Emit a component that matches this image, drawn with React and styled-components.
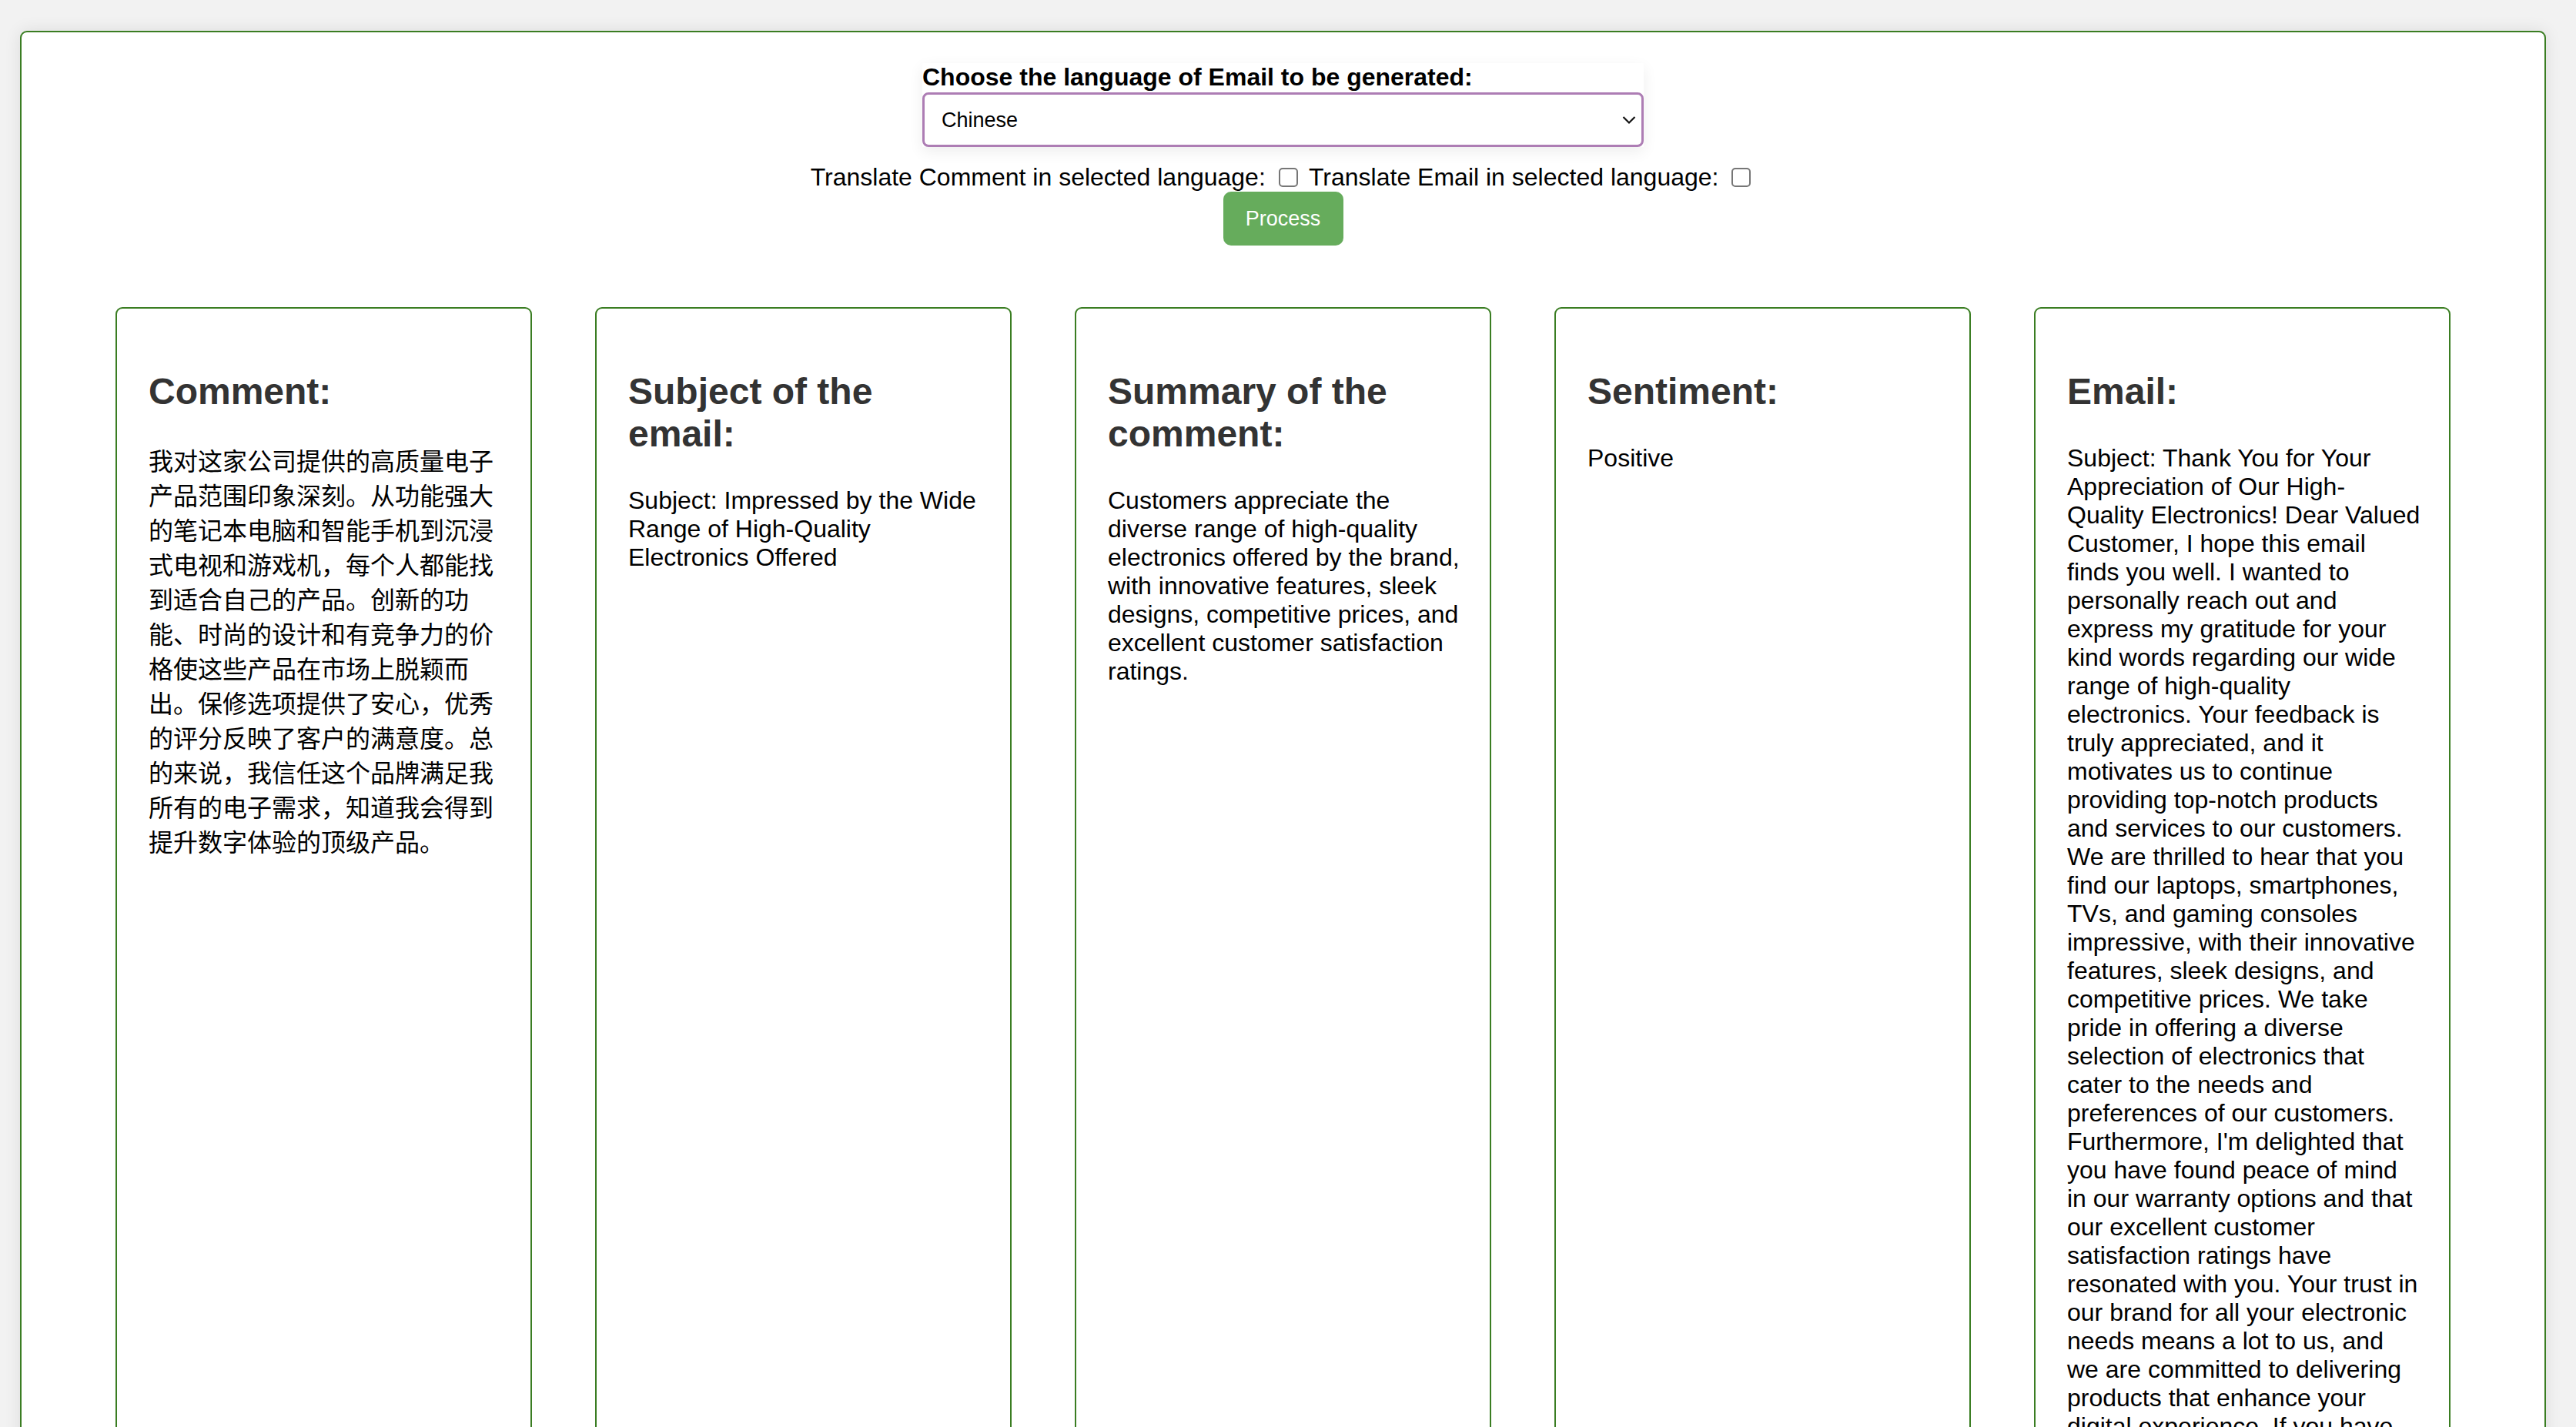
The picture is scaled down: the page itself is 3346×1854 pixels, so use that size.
import React, { useState } from 'react';
import styled, { createGlobalStyle, css } from 'styled-components';

const GlobalStyle = createGlobalStyle`
  body {
    margin: 0;
    background: #f2f2f2;
    font-family: "Liberation Sans", Arial, "Noto Sans CJK SC", sans-serif;
    color: #000;
  }
`;

const Container = styled.div`
  margin: 40px 39px 40px 26px;
  padding: 40px 0 80px;
  background: #fff;
  border: 2px solid #3a7d22;
  border-radius: 9px;
  box-shadow: 0 0 22px rgba(0, 0, 0, 0.09);
`;

const LangBox = styled.div`
  width: 937px;
  margin: 0 auto;
  background: #fff;
  box-shadow: 0 6px 18px rgba(0, 0, 0, 0.07);
`;

const Label = styled.label`
  display: block;
  font-size: 32px;
  line-height: 37px;
  font-weight: bold;
`;

const SelectWrap = styled.div`
  position: relative;
  margin-top: 1px;
`;

const Select = styled.select`
  display: block;
  width: 100%;
  height: 71px;
  box-sizing: border-box;
  padding: 0 60px 0 22px;
  border: 3.5px solid #ad7db4;
  border-radius: 8px;
  background: #fff;
  font-family: inherit;
  font-size: 27px;
  color: #000;
  appearance: none;
  outline: none;
`;

const Chevron = styled.svg`
  position: absolute;
  right: 10px;
  top: 50%;
  transform: translateY(-50%);
  pointer-events: none;
`;

const OptionsRow = styled.div`
  margin-top: 21px;
  text-align: center;
  font-size: 32px;
  line-height: 37px;
`;

const Check = styled.input`
  appearance: none;
  width: 25px;
  height: 25px;
  box-sizing: border-box;
  margin: 0 6px 0 8px;
  border: 2px solid #767676;
  border-radius: 5px;
  background: #fff;
  vertical-align: -2px;
  &:checked {
    background: #3b82f6;
    border-color: #3b82f6;
  }
`;

const ProcessButton = styled.button`
  display: block;
  margin: 0 auto;
  width: 156px;
  height: 70px;
  border: none;
  border-radius: 10px;
  background: #66ac5c;
  color: #fff;
  font-family: inherit;
  font-size: 27px;
  cursor: pointer;
`;

const CardRow = styled.div`
  display: flex;
  justify-content: center;
  align-items: stretch;
  gap: 82px;
  margin-top: 80px;
`;

const Card = styled.div`
  flex: 0 0 541px;
  box-sizing: border-box;
  padding: 38px 36.6px 60px 41px;
  border: 2px solid #3a7d22;
  border-radius: 9px;
`;

const CardTitle = styled.h2`
  margin: 42px 0 41px;
  font-size: 48px;
  font-weight: bold;
  color: #333;
`;

const CardText = styled.p`
  margin: 0;
  font-size: 32px;
  ${(p) =>
    p.$cjk &&
    css`
      font-family: "Noto Sans CJK SC", sans-serif;
      line-height: 45px;
      margin-top: -2px;
    `}
`;

const results = [
  {
    title: 'Comment:',
    cjk: true,
    text: '我对这家公司提供的高质量电子产品范围印象深刻。从功能强大的笔记本电脑和智能手机到沉浸式电视和游戏机，每个人都能找到适合自己的产品。创新的功能、时尚的设计和有竞争力的价格使这些产品在市场上脱颖而出。保修选项提供了安心，优秀的评分反映了客户的满意度。总的来说，我信任这个品牌满足我所有的电子需求，知道我会得到提升数字体验的顶级产品。',
  },
  {
    title: 'Subject of the email:',
    text: 'Subject: Impressed by the Wide Range of High-Quality Electronics Offered',
  },
  {
    title: 'Summary of the comment:',
    text: 'Customers appreciate the diverse range of high-quality electronics offered by the brand, with innovative features, sleek designs, competitive prices, and excellent customer satisfaction ratings.',
  },
  {
    title: 'Sentiment:',
    text: 'Positive',
  },
  {
    title: 'Email:',
    text: "Subject: Thank You for Your Appreciation of Our High-Quality Electronics! Dear Valued Customer, I hope this email finds you well. I wanted to personally reach out and express my gratitude for your kind words regarding our wide range of high-quality electronics. Your feedback is truly appreciated, and it motivates us to continue providing top-notch products and services to our customers. We are thrilled to hear that you find our laptops, smartphones, TVs, and gaming consoles impressive, with their innovative features, sleek designs, and competitive prices. We take pride in offering a diverse selection of electronics that cater to the needs and preferences of our customers. Furthermore, I'm delighted that you have found peace of mind in our warranty options and that our excellent customer satisfaction ratings have resonated with you. Your trust in our brand for all your electronic needs means a lot to us, and we are committed to delivering products that enhance your digital experience. If you have any further questions or need assistance, please do not hesitate to reach out to our customer support team. Once again, thank you for choosing our brand. Best regards, Customer Service Team",
  },
];

const App = () => {
  const [language, setLanguage] = useState('Chinese');
  const [translateComment, setTranslateComment] = useState(false);
  const [translateEmail, setTranslateEmail] = useState(false);

  return (
    <>
      <GlobalStyle />
      <Container>
        <LangBox>
          <Label htmlFor='lang'>Choose the language of Email to be generated:</Label>
          <SelectWrap>
            <Select id='lang' value={language} onChange={(e) => setLanguage(e.target.value)}>
              <option>English</option>
              <option>Chinese</option>
              <option>Spanish</option>
              <option>French</option>
              <option>German</option>
            </Select>
            <Chevron width='18' height='11' viewBox='0 0 18 11'>
              <polyline points='1.5,1.5 9,9 16.5,1.5' fill='none' stroke='#111' strokeWidth='2.2' />
            </Chevron>
          </SelectWrap>
        </LangBox>

        <OptionsRow>
          Translate Comment in selected language:{' '}
          <Check type='checkbox' checked={translateComment} onChange={() => setTranslateComment(!translateComment)} />{' '}
          Translate Email in selected language:{' '}
          <Check type='checkbox' checked={translateEmail} onChange={() => setTranslateEmail(!translateEmail)} />
        </OptionsRow>

        <ProcessButton>Process</ProcessButton>

        <CardRow>
          {results.map((item) => (
            <Card key={item.title}>
              <CardTitle>{item.title}</CardTitle>
              <CardText $cjk={item.cjk}>{item.text}</CardText>
            </Card>
          ))}
        </CardRow>
      </Container>
    </>
  );
};

export default App;
